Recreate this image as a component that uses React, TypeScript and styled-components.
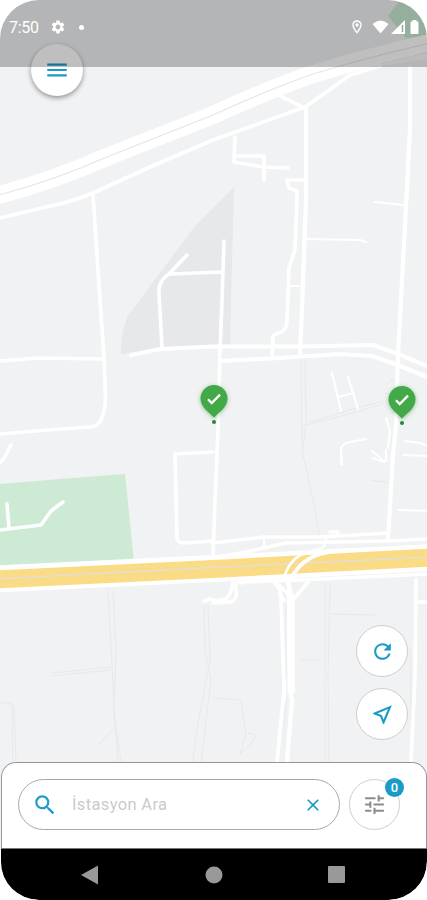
import React from 'react';
import styled, { createGlobalStyle } from 'styled-components';
import {
  MdClose,
  MdMenu,
  MdOutlineLocationOn,
  MdOutlineNearMe,
  MdRefresh,
  MdSearch,
  MdSettings,
  MdTune,
} from 'react-icons/md';

const ACCENT = '#1a9bc7';

const GlobalStyle = createGlobalStyle`
  * { box-sizing: border-box; }
  body { margin: 0; background: #fff; font-family: Roboto, "Noto Sans", sans-serif; }
  svg { display: block; flex: none; }
  button { padding: 0; font: inherit; }
`;

const Phone = styled.main`
  display: grid;
  width: 427px;
  height: 900px;
  overflow: hidden;
  border-radius: 39px;
  background: #fff;
`;

const MapLayer = styled.svg`
  grid-area: 1 / 1;
  width: 427px;
  height: 850px;
`;

const Overlay = styled.div`
  grid-area: 1 / 1;
  z-index: 1;
  display: flex;
  flex-direction: column;
  height: 900px;
`;

const StatusBar = styled.header`
  z-index: 2;
  flex: none;
  display: flex;
  align-items: center;
  height: 67px;
  padding: 0 7px 13px 9px;
  color: #fff;
  background: rgba(0, 0, 0, 0.252);
`;

const Clock = styled.span`
  width: 41px;
  padding-top: 2px;
  font-size: 16px;
  letter-spacing: -0.3px;
  line-height: 20px;
`;

const Dot = styled.span`
  width: 5px;
  height: 5px;
  margin-left: 13px;
  border-radius: 50%;
  background: #fff;
`;

const StatusIcons = styled.div`
  display: flex;
  align-items: center;
  gap: 2px;
  margin-left: auto;
`;

const LocationIcon = styled(MdOutlineLocationOn)`
  margin-right: 5px;
`;

const MenuButton = styled.button`
  flex: none;
  display: grid;
  place-items: center;
  width: 52px;
  height: 52px;
  margin: -23px 0 0 31px;
  border: 0;
  border-radius: 50%;
  color: ${ACCENT};
  background: #fff;
  box-shadow: 0 2px 5px rgba(0, 0, 0, 0.4);
`;

const FabColumn = styled.div`
  display: flex;
  flex-direction: column;
  gap: 11px;
  align-self: flex-end;
  margin: auto 19px 22px 0;
`;

const RoundButton = styled.button<{ $size: number; $color: string }>`
  flex: none;
  display: grid;
  place-items: center;
  width: ${(p) => p.$size}px;
  height: ${(p) => p.$size}px;
  border: 1px solid #cfcfcf;
  border-radius: 50%;
  color: ${(p) => p.$color};
  background: #fff;
`;

const Sheet = styled.section`
  flex: none;
  display: flex;
  align-items: flex-start;
  gap: 9px;
  height: 86px;
  margin-left: 1px;
  padding: 16px 0 0 16px;
  border: 1px solid #969696;
  border-bottom: 0;
  border-radius: 15px 15px 0 0;
  background: #fff;
`;

const SearchField = styled.label`
  display: flex;
  align-items: center;
  width: 322px;
  height: 51px;
  padding: 0 16px 0 13px;
  border: 1px solid #a8a8a8;
  border-radius: 26px;
  color: ${ACCENT};
`;

const SearchInput = styled.input`
  flex: 1;
  min-width: 0;
  margin-left: 14px;
  padding: 0 0 1px;
  border: 0;
  outline: 0;
  font: 16.500px Roboto, "Noto Sans", sans-serif;
  letter-spacing: 0.35px;
  color: #555;
  background: transparent;
  &::placeholder { color: #cbcbcb; opacity: 1; }
`;

const FilterSlot = styled.div`
  position: relative;
`;

const Badge = styled.span`
  position: absolute;
  top: -1px;
  right: -4px;
  width: 19px;
  height: 19px;
  border-radius: 50%;
  font-size: 13px;
  font-weight: 500;
  line-height: 19px;
  text-align: center;
  color: #fff;
  background: ${ACCENT};
`;

const NavBar = styled.nav`
  flex: none;
  display: flex;
  align-items: center;
  justify-content: space-between;
  height: 52px;
  margin-left: 1px;
  padding: 0 82px 0 80px;
  border-top: 1px solid #777;
  border-radius: 0 0 38px 38px;
  background: #000;
`;

const MinorRoads = styled.g`
  fill: none;
  stroke: #e7e9eb;
  stroke-width: 1;
`;

const Roads = styled.g<{ $width: number }>`
  fill: none;
  stroke: #fff;
  stroke-width: ${(p) => p.$width};
  stroke-linecap: round;
  stroke-linejoin: round;
`;

const PinShadow = styled.g`
  filter: drop-shadow(0 1px 2px rgba(50, 150, 60, 0.5));
`;

const HIGHWAY = 'M-5 196Q50 182 107 157L213 115Q270 89 313 74 365 58 430 43';

function StationPin({ x, y }: { x: number; y: number }) {
  return (
    <g transform={`translate(${x} ${y})`}>
      <PinShadow>
        <path
          d="M0 18.5C-3.5 14.5-13.5 8.5-13.5-.5a13.5 13.5 0 0 1 27 0C13.5 8.5 3.5 14.5 0 18.5Z"
          fill="#43a948"
        />
      </PinShadow>
      <path d="M-6 .2-2.3 4 6-4.4" fill="none" stroke="#fff" strokeWidth="2.3" />
      <circle cy="23" r="2" fill="#218a35" />
    </g>
  );
}

function CityMap() {
  return (
    <MapLayer viewBox="0 0 427 850">
      <rect width="427" height="850" fill="#f0f2f3" />
      <path d="M427 0H400L388 16 406 38 427 36Z" fill="#c9e8d2" />
      <path d="M234 187 195 226 127 317Q121 333 121 354L160 349 230 346Z" fill="#e7e8eb" />
      <path d="M0 484 60 479 125 474 134 562 0 568Z" fill="#cdead4" />

      <MinorRoads>
        <path d="M301 357 302 450 313 500 319 535M305 357 306 420 303 450M303 426 345 415 383 404M308 423 346 411 383 401" />
        <path d="M108 590 112 665 115 720 118 762M113 590 116 650 114 715 121 762M0 702 12 704 13 762M14 706 16 762M52 676 110 670M52 673 110 667" />
        <path d="M208 605 210 660 196 735 193 762M204 605 205 650 211 680 201 762M325 582 325 762M330 582 328 675 329 762M331 614 375 615M300 660 322 660" />
        <path d="M213 698 241 700 246 735 240 754 250 745 256 735 248 733M370 480 390 483M410 650 412 762M115 727 105 738 98 745M387 385 391 380 398 383M385 393 396 396" />
      </MinorRoads>

      <Roads $width={2.2}>
        <path d="M332 373 341 411M348 377 358 409M338 397 354 393M341 464V450Q341 444 350 442L366 439M405 441 420 443 427 446M386 418 390 431 388 448M372 451 384 461H386V450M373 458 384 462M404 455 427 456M341 450 342 465M399 510 427 511" />
        <path d="M304 239 360 240 366 242M375 202 404 205M290 286H302M264 537V547" />
      </Roads>

      <Roads $width={3.6}>
        <path d="M0 218 46 207Q75 201 93 193L150 167 213 140 305 107 328 91 350 75 380 66" />
        <path d="M280 96 305 108M235 137 234 162 263 167 288 168M234 156H264V180M304 180H287L289 188 297 191 296 225 295 250 289 268 287 320Q287 331 279 333T273 340L272 355" />
        <path d="M93 195 95 225 99 285 104 358 105.500 395Q105 426 91 427L60 429 0 434M0 361 38 358 104 359M11 445 5 457 0 463" />
        <path d="M187 255 169 274Q158 281 159 293L162 348M170 274 222 272M224 241 222 300 220 352 218 430 215 500 213 556" />
        <path d="M0 530 41 525 51 511 63 502M7 504 9 528M213 452 175 454 177 538Q178 543 184 543L213 541" />
        <path d="M213 543 264 537H320L388 533M330 532H338M213 558 246 552 285 543 388 541 427 539" />
        <path d="M204 601 210 599Q216 602 226 599 232 595 233 580M213 603 230 602Q238 600 236 590T243 583M275 583 280 589V595L284 600M308 582 292 601M279 585 289 595" />
        <path d="M243 582 300 580 427 574M416 580 415 675 411 762M416 602 427 602M281 598 284 690 277 762" />
      </Roads>

      <Roads $width={4.2}>
        <path d="M306 107 306 200 302 308 300 354M410 68 410 130 405 225 401 300 398 355 396 425 393 455 388 540" />
        <path d="M131 355 160 349 213 346.500H300L373 345 398 354 427 366M220 361 280 358 340 354 372 356 398 365 427 377" />
        <path d="M290 690 292 700 287 762M284 700 287 680" />
      </Roads>

      <path d={HIGHWAY} fill="none" stroke="#fff" strokeWidth="18" />
      <path d={HIGHWAY} fill="none" stroke="#e5e5e5" strokeWidth="1.1" />
      <path d="M380 64 430 52" fill="none" stroke="#dedede" strokeWidth="1" />
      <Roads $width={6}><path d="M345 68 427 56" opacity=".6" /></Roads>

      <path d="M-3 579 213 568.500 430 557.500" fill="none" stroke="#fff" strokeWidth="27" />
      <path d="M-3 579.500 213 569 430 557.500" fill="none" stroke="#fadb86" strokeWidth="18" />
      <path d="M-3 579 213 567.500 430 557" fill="none" stroke="#e5dfd0" strokeWidth="1.5" />

      <Roads $width={2.6}>
        <path d="M284 578Q289 560 303 554L322 548Q325 547 326 539" />
      </Roads>
      <Roads $width={3.8}>
        <path d="M290 580Q298 565 309 559 317 553 335 551" />
      </Roads>
      <Roads $width={8}>
        <path d="M291 597V690" />
      </Roads>
      <Roads $width={5}>
        <path d="M288 579 291 600" />
      </Roads>
      <path d="M286 605 287 690 283 748" fill="none" stroke="#eceef0" strokeWidth="1" />

      <StationPin x={214} y={399} />
      <StationPin x={402} y={400} />
    </MapLayer>
  );
}

export default function App() {
  return (
    <>
      <GlobalStyle />
      <Phone>
        <CityMap />
        <Overlay>
          <StatusBar>
            <Clock>7:50</Clock>
            <MdSettings size={16} />
            <Dot />
            <StatusIcons>
              <LocationIcon size={16} />
              <svg width="17" height="14" viewBox="0 0 17 14">
                <path d="M.5 4Q8.500-3 16.500 4L8.500 13.500Z" fill="#fff" />
              </svg>
              <svg width="15" height="14" viewBox="0 0 15 14">
                <path d="M0 14 14 0V14Z" fill="#fff" />
                <path d="M11.500 5V12" stroke="#93a89b" strokeWidth="1.500" />
              </svg>
              <svg width="12" height="14" viewBox="0 0 12 14">
                <path d="M4.500 0H8.500V1.500H9.500Q10.500 1.500 10.500 2.500V13Q10.500 14 9.500 14H3.500Q2.500 14 2.500 13V2.500Q2.500 1.500 3.500 1.500H4.500Z" fill="#fff" />
              </svg>
            </StatusIcons>
          </StatusBar>

          <MenuButton aria-label="Menü"><MdMenu size={26} /></MenuButton>

          <FabColumn>
            <RoundButton $size={52} $color={ACCENT} aria-label="Yenile"><MdRefresh size={25} /></RoundButton>
            <RoundButton $size={52} $color={ACCENT} aria-label="Konumum"><MdOutlineNearMe size={25} /></RoundButton>
          </FabColumn>

          <Sheet>
            <SearchField>
              <MdSearch size={26} />
              <SearchInput placeholder="İstasyon Ara" />
              <MdClose size={20} />
            </SearchField>
            <FilterSlot>
              <RoundButton $size={51} $color="#8c8c8c" aria-label="Filtrele"><MdTune size={25} /></RoundButton>
              <Badge>0</Badge>
            </FilterSlot>
          </Sheet>

          <NavBar>
            <svg width="18" height="20" viewBox="0 0 18 20"><path d="M0 10 17 .5V19.500Z" fill="#999" /></svg>
            <svg width="18" height="18" viewBox="0 0 18 18"><circle cx="9" cy="9" r="8.500" fill="#999" /></svg>
            <svg width="17" height="17" viewBox="0 0 17 17"><rect width="17" height="17" rx="1" fill="#999" /></svg>
          </NavBar>
        </Overlay>
      </Phone>
    </>
  );
}
